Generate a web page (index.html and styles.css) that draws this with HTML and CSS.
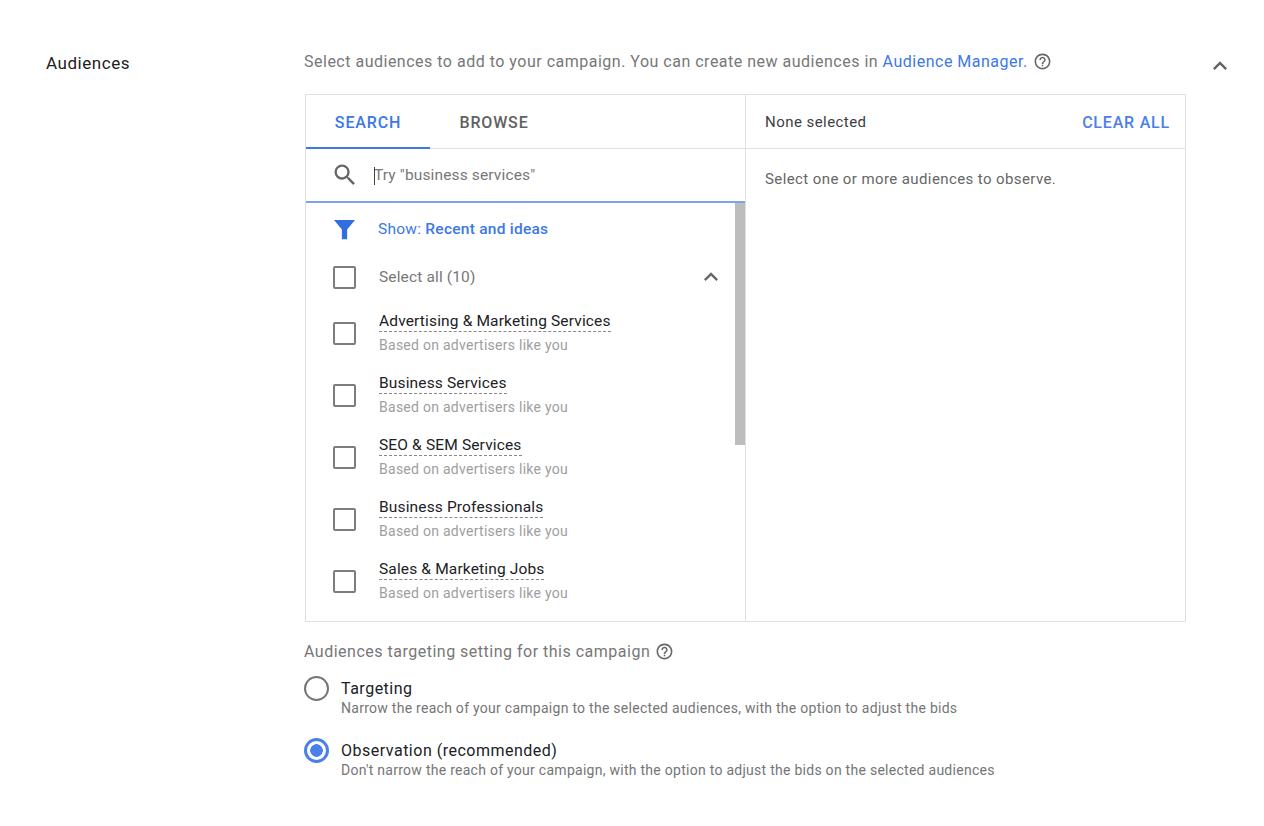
FILE: index.html
```html
<!DOCTYPE html>
<html lang="en">
<head>
  <meta charset="UTF-8">
  <title>Audiences</title>
  <link rel="stylesheet" href="styles.css">
</head>
<body>

<div class="section">
  <div class="section-title">Audiences</div>

  <div class="section-body">
    <div class="intro">
      <span>Select audiences to add to your campaign. You can create new audiences in <a href="#">Audience Manager.</a></span>
      <svg class="help" viewBox="0 0 24 24"><path d="M11 18h2v-2h-2v2zm1-16C6.48 2 2 6.48 2 12s4.48 10 10 10 10-4.48 10-10S17.52 2 12 2zm0 18c-4.41 0-8-3.59-8-8s3.59-8 8-8 8 3.59 8 8-3.59 8-8 8zm0-14c-2.21 0-4 1.79-4 4h2c0-1.1.9-2 2-2s2 .9 2 2c0 2-3 1.75-3 5h2c0-2.25 3-2.5 3-5 0-2.21-1.79-4-4-4z"/></svg>
    </div>

    <div class="picker">
      <!-- Left: search and list -->
      <div class="picker-left">
        <div class="tabs">
          <div class="tab active">SEARCH</div>
          <div class="tab">BROWSE</div>
        </div>
        <div class="search-row">
          <svg class="search-icon" viewBox="0 0 24 24"><path d="M15.5 14h-.79l-.28-.27A6.47 6.47 0 0 0 16 9.5 6.5 6.5 0 1 0 9.5 16c1.61 0 3.09-.59 4.23-1.57l.27.28v.79l5 4.99L20.49 19l-4.99-5zm-6 0C7.01 14 5 11.99 5 9.5S7.01 5 9.5 5 14 7.01 14 9.5 11.99 14 9.5 14z"/></svg>
          <div class="search-input"><span class="caret"></span>Try "business services"</div>
        </div>
        <div class="list">
          <div class="scrollbar"></div>
          <div class="show-row">
            <svg class="filter-icon" viewBox="0 0 24 24"><path d="M0 1h24L15 12v11H9V12z"/></svg>
            <div>Show: <strong>Recent and ideas</strong></div>
          </div>
          <div class="select-all">
            <span class="checkbox"></span>
            <span class="select-label">Select all (10)</span>
            <svg class="chevron small" viewBox="0 0 24 24"><path d="M12 8l-6 6 1.41 1.41L12 10.830l4.590 4.580L18 14z"/></svg>
          </div>
          <div class="item">
            <span class="checkbox"></span>
            <div><div class="item-name">Advertising &amp; Marketing Services</div><div class="item-sub">Based on advertisers like you</div></div>
          </div>
          <div class="item">
            <span class="checkbox"></span>
            <div><div class="item-name">Business Services</div><div class="item-sub">Based on advertisers like you</div></div>
          </div>
          <div class="item">
            <span class="checkbox"></span>
            <div><div class="item-name">SEO &amp; SEM Services</div><div class="item-sub">Based on advertisers like you</div></div>
          </div>
          <div class="item">
            <span class="checkbox"></span>
            <div><div class="item-name">Business Professionals</div><div class="item-sub">Based on advertisers like you</div></div>
          </div>
          <div class="item">
            <span class="checkbox"></span>
            <div><div class="item-name">Sales &amp; Marketing Jobs</div><div class="item-sub">Based on advertisers like you</div></div>
          </div>
        </div>
      </div>

      <!-- Right: selection -->
      <div class="picker-right">
        <div class="selected-head">
          <span>None selected</span>
          <a href="#" class="clear-all">CLEAR ALL</a>
        </div>
        <div class="selected-empty">Select one or more audiences to observe.</div>
      </div>
    </div>

    <div class="setting-title">
      <span>Audiences targeting setting for this campaign</span>
      <svg class="help" viewBox="0 0 24 24"><path d="M11 18h2v-2h-2v2zm1-16C6.48 2 2 6.48 2 12s4.48 10 10 10 10-4.48 10-10S17.52 2 12 2zm0 18c-4.41 0-8-3.59-8-8s3.59-8 8-8 8 3.59 8 8-3.59 8-8 8zm0-14c-2.21 0-4 1.79-4 4h2c0-1.1.9-2 2-2s2 .9 2 2c0 2-3 1.75-3 5h2c0-2.25 3-2.5 3-5 0-2.21-1.79-4-4-4z"/></svg>
    </div>

    <div class="radio-row">
      <span class="radio"></span>
      <div class="radio-text">
        <div class="radio-name">Targeting</div>
        <div class="radio-sub">Narrow the reach of your campaign to the selected audiences, with the option to adjust the bids</div>
      </div>
    </div>
    <div class="radio-row">
      <span class="radio checked"></span>
      <div class="radio-text">
        <div class="radio-name">Observation (recommended)</div>
        <div class="radio-sub">Don't narrow the reach of your campaign, with the option to adjust the bids on the selected audiences</div>
      </div>
    </div>
  </div>

  <svg class="chevron collapse" viewBox="0 0 24 24"><path d="M12 8l-6 6 1.41 1.41L12 10.830l4.590 4.580L18 14z"/></svg>
</div>

</body>
</html>
```

FILE: styles.css
```css
* { margin: 0; padding: 0; box-sizing: border-box; }
body { font-family: Roboto, sans-serif; background: #fff; color: #5f6368; font-size: 14px; }
a { color: #3c78e6; text-decoration: none; }

.section { display: flex; align-items: flex-start; padding: 50px 0 0 46px; }
.section-title { width: 259px; font-size: 17px; letter-spacing: .55px; color: #202124; padding-top: 2px; line-height: 22px; }
.section-body { width: 881px; }
.collapse { width: 28px; height: 28px; margin: 2px 0 0 20px; fill: #5f6368; }

.intro {
  display: flex; align-items: center; gap: 5px;
  font-size: 16px; letter-spacing: .5px; line-height: 22px; height: 23px; margin-left: -1px;
  color: #777;
}
.help { width: 19px; height: 19px; fill: #666; flex: none; }

.picker {
  display: flex;
  height: 528px;
  margin-top: 21px;
  border: 1px solid #e0e0e0;
}
.picker-left { width: 440px; border-right: 1px solid #e0e0e0; display: flex; flex-direction: column; }
.picker-right { flex: 1; }

.tabs { display: flex; height: 54px; border-bottom: 1px solid #e0e0e0; }
.tab { height: 54px; line-height: 56px; text-align: center; font-size: 16px; font-weight: 500; color: #616161; letter-spacing: .85px; }
.tab.active { color: #3c78e6; border-bottom: 2px solid #3c78e6; width: 124px; }
.tab + .tab { width: 128px; }

.search-row { display: flex; align-items: center; height: 54px; border-bottom: 2px solid #7ba4ef; }
.search-icon { width: 28px; height: 28px; margin-left: 25px; fill: #666; flex: none; }
.search-input { margin-left: 15px; font-size: 15.500px; letter-spacing: .14px; color: #777; position: relative; }
.caret { position: absolute; left: 0; top: 1px; width: 1px; height: 18px; background: #444; }

.list { position: relative; flex: 1; overflow: hidden; }
.scrollbar { position: absolute; right: 0; top: 0; width: 10px; height: 242px; background: #bdbdbd; }

.show-row { display: flex; align-items: center; height: 52px; font-size: 15.500px; letter-spacing: .25px; color: #3c78e6; }
.show-row strong { font-weight: 500; }
.filter-icon { width: 21px; height: 21px; margin: 0 23px 0 28px; fill: #2f6fe0; flex: none; }

.checkbox { width: 23px; height: 23px; border: 2px solid #7d7d7d; border-radius: 2px; flex: none; margin: 0 23px 0 27px; }

.select-all { display: flex; align-items: center; height: 47px; padding-bottom: 3px; }
.select-label { font-size: 15.500px; letter-spacing: .14px; color: #777; }
.chevron.small { width: 28px; height: 28px; fill: #666; margin-left: auto; margin-right: 20px; }

.item { display: flex; align-items: center; height: 62px; }
.item-name {
  display: table; font-size: 15.500px; letter-spacing: .15px; line-height: 19px; color: #202124;
  border-bottom: 1px dashed #888;
}
.item-sub { font-size: 14px; letter-spacing: .27px; line-height: 19px; color: #9e9e9e; margin-top: 4px; }

.selected-head {
  display: flex; justify-content: space-between; align-items: center;
  height: 54px; padding: 0 15px 0 19px;
  border-bottom: 1px solid #e0e0e0;
  font-size: 15px; letter-spacing: .45px; color: #3c4043;
}
.clear-all { font-size: 16px; font-weight: 500; letter-spacing: .8px; color: #4a80e8; padding-top: 2px; }
.selected-empty { padding: 21px 0 0 19px; font-size: 15px; letter-spacing: .4px; line-height: 18px; color: #666; }

.setting-title {
  display: flex; align-items: center; gap: 5px;
  margin: 18px 0 0 -1px;
  height: 22px;
  font-size: 16px; letter-spacing: .5px; color: #777;
}
.radio-row { display: flex; align-items: flex-start; height: 62px; margin-left: -1px; }
.radio { width: 25px; height: 25px; margin: 14px 12px 0 0; border: 2px solid #757575; border-radius: 50%; flex: none; }
.radio.checked { border: 3px solid #4a80e8; background: radial-gradient(circle, #4a80e8 0 6px, #fff 6.500px); }
.radio-text { padding-top: 16px; }
.radio-name { font-size: 16px; letter-spacing: .5px; line-height: 21px; color: #202124; }
.radio-sub { font-size: 14px; letter-spacing: .27px; line-height: 18px; color: #757575; }
```
